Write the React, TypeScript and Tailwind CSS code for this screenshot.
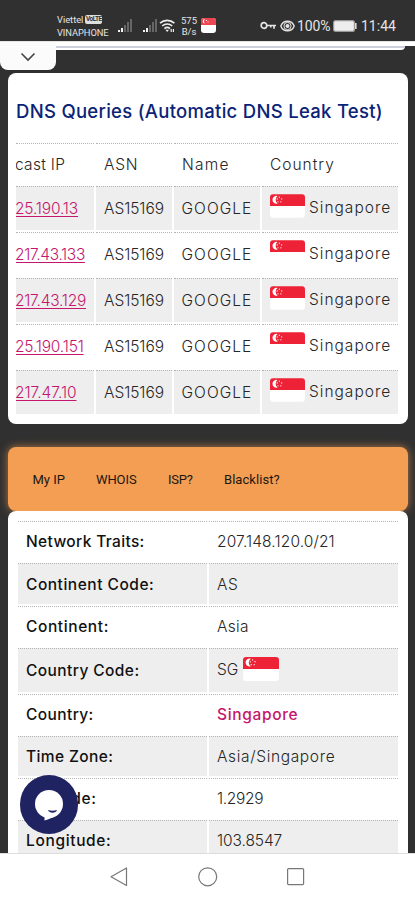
import clsx from "clsx"
import type { ReactNode } from "react"

const dnsRows = [
  { ip: "25.190.13", track: "tracking-[-0.17px]" },
  { ip: "217.43.133", track: "tracking-[-0.35px]" },
  { ip: "217.43.129", track: "tracking-[-0.25px]" },
  { ip: "25.190.151", track: "tracking-[-0.18px]" },
  { ip: "217.47.10", track: "tracking-[-0.05px]" },
]

interface Trait {
  label: string
  labelClass: string
  value: ReactNode
  valueClass: string
  height: string
}

const light = "font-light text-[#262626]"

const traits: Trait[] = [
  { label: "Network Traits:", labelClass: "tracking-[0.35px]", value: "207.148.120.0/21", valueClass: clsx(light, "tracking-[0.12px]"), height: "h-[42px]" },
  { label: "Continent Code:", labelClass: "tracking-[0.52px]", value: "AS", valueClass: clsx(light, "tracking-[0.5px]"), height: "h-[43px]" },
  { label: "Continent:", labelClass: "tracking-[0.6px]", value: "Asia", valueClass: clsx(light, "tracking-[0.3px]"), height: "h-[42px]" },
  { label: "Country Code:", labelClass: "tracking-[0.42px]", value: "SG", valueClass: light, height: "h-[46px]" },
  { label: "Country:", labelClass: "tracking-[0.4px]", value: "Singapore", valueClass: "font-medium tracking-[0.65px] text-[#c4166c]", height: "h-[42px]" },
  { label: "Time Zone:", labelClass: "tracking-[0.4px]", value: "Asia/Singapore", valueClass: clsx(light, "tracking-[0.65px]"), height: "h-[42px]" },
  { label: "Latitude:", labelClass: "tracking-[0.65px]", value: "1.2929", valueClass: clsx(light, "tracking-[-0.3px]"), height: "h-[42px]" },
  { label: "Longitude:", labelClass: "tracking-[0.65px]", value: "103.8547", valueClass: clsx(light, "tracking-[-0.08px]"), height: "h-[42px]" },
]

function Flag({ className }: { className?: string }) {
  return (
    <svg viewBox="0 0 36 24" className={clsx("shrink-0", className)}>
      <path d="M0 12V3a3 3 0 0 1 3-3h30a3 3 0 0 1 3 3v9Z" fill="#ee2237" />
      <path d="M0 12h36v9a3 3 0 0 1-3 3H3a3 3 0 0 1-3-3Z" fill="#fff" />
      <path d="M7.8 1.8A4 4 0 1 0 7.8 9.4A4.6 4.6 0 0 1 7.8 1.8Z" fill="#fff" />
      <g fill="#fff">
        <circle cx="9.6" cy="2.9" r=".65" />
        <circle cx="12" cy="4.7" r=".65" />
        <circle cx="11.2" cy="7.7" r=".65" />
        <circle cx="8.2" cy="7.7" r=".65" />
        <circle cx="7.4" cy="4.8" r=".65" />
      </g>
    </svg>
  )
}

function Signal() {
  return (
    <svg width="14" height="14" viewBox="0 0 14 14">
      <path d="M0 11h2v2H0zM3 9h2v4H3z" fill="#f4f4f4" />
      <path d="M6 6h2v7H6zM9 3h2v10H9zM12 0h2v13h-2z" fill="#666" />
    </svg>
  )
}

function StatusBar() {
  return (
    <header className="flex h-[41px] shrink-0 items-start pl-[57px] font-['Roboto',sans-serif] text-[#e4e4e4]">
      <div className="w-[61px] pt-[13px] text-[9.3px] leading-[13px]">
        <div className="flex items-center whitespace-nowrap">
          Viettel
          <span className="ml-[2px] flex h-[9px] w-[17px] items-center justify-center rounded-[2px] bg-[#dedede] text-[6.5px] font-bold tracking-[-0.5px] text-[#303030]">
            VoLTE
          </span>
        </div>
        <div className="tracking-[-0.05px]">VINAPHONE</div>
      </div>
      <div className="flex pt-[19px]">
        <Signal />
        <div className="w-[11px]" />
        <Signal />
      </div>
      <svg width="18" height="16" viewBox="0 0 18 16" className="mt-[18px] ml-[2px]" fill="none" stroke="#eee" strokeWidth="1.6">
        <path d="M1 5.2a10.5 10.5 0 0 1 14.4 0M3.2 8a7.4 7.4 0 0 1 10 0M5.4 10.6a4.2 4.2 0 0 1 5.6 0" />
        <path d="M6.4 11.8h3.6L8.2 14Z" fill="#eee" stroke="none" />
        <path d="M12.2 11v3M14.4 11v3" strokeWidth="1.2" />
      </svg>
      <div className="mt-[15px] ml-[4px] w-[16px] text-center text-[9.5px] leading-[11px]">
        <div>575</div>
        <div>B/s</div>
      </div>
      <div className="mt-[18px] ml-[4px] h-[15px] w-[15px] overflow-hidden rounded-[3px] bg-white">
        <svg width="15" height="7" viewBox="0 0 15 7">
          <path d="M0 0h15v7H0z" fill="#ed4452" />
          <path d="M4 1a2.2 2.2 0 1 0 0 4.4A2.9 2.9 0 0 1 4 1Z" fill="#fff" />
          <path d="M5 2h1v1H5zM6.5 3.5h1v1h-1z" fill="#fff" />
        </svg>
      </div>
      <svg width="17" height="10" viewBox="0 0 17 10" className="mt-[21px] ml-[44px]" fill="none" stroke="#e4e4e4" strokeWidth="1.7">
        <circle cx="4" cy="4.5" r="2.8" />
        <path d="M6.8 4.5H16M14 4.5v3.2M10.8 4.5v2" />
      </svg>
      <svg width="15" height="12" viewBox="0 0 15 12" className="mt-[20px] ml-[3px]" fill="none" stroke="#e4e4e4" strokeWidth="1.4">
        <path d="M.8 6C3.3-.4 11.7-.4 14.2 6C11.7 12.4 3.3 12.4.8 6Z" />
        <circle cx="7.5" cy="6" r="3.6" strokeWidth="1" />
        <circle cx="7.5" cy="6" r="2" fill="#e4e4e4" stroke="none" />
      </svg>
      <div className="mt-[17px] ml-[2px] w-[33px] text-[14px] leading-[18px] tracking-[-0.1px] whitespace-nowrap">100%</div>
      <svg width="24" height="12" viewBox="0 0 24 12" className="mt-[20px] ml-[3px]">
        <rect x=".6" y=".6" width="20.8" height="10.8" rx="2" fill="#eee" stroke="#999" strokeWidth="1.2" />
        <path d="M22 3h1.6v6H22z" fill="#ddd" />
      </svg>
      <div className="mt-[17px] ml-[4px] text-[14px] leading-[18px] whitespace-nowrap">11:44</div>
    </header>
  )
}

const dnsGrid = "grid grid-cols-[78px_76px_86px_136px] gap-x-[2px]"
const dotted = "border-t border-dotted border-[#b5b5b5]"

function DnsCard() {
  return (
    <section className="mr-[7px] ml-[8px] mt-[3px] h-[351px] shrink-0 overflow-hidden rounded-lg bg-white px-[8px] pt-[27px]">
      <h2 className="h-[43px] text-[18.5px] leading-[23px] font-[450] tracking-[0.29px] whitespace-nowrap text-[#0a2378]">
        DNS Queries (Automatic DNS Leak Test)
      </h2>
      <div className="w-[382px] overflow-hidden text-[15.5px] font-light text-[#262626]">
        <div className={clsx(dnsGrid, "h-[43px] leading-[41px]")}>
          <div className={clsx(dotted, "overflow-hidden")}>
            <span className="-ml-[1px] tracking-[0.3px] whitespace-nowrap">cast IP</span>
          </div>
          <div className={clsx(dotted, "pl-2 tracking-[0.7px]")}>ASN</div>
          <div className={clsx(dotted, "pl-2 tracking-[1.2px]")}>Name</div>
          <div className={clsx(dotted, "pl-2 tracking-[1px]")}>Country</div>
        </div>
        {dnsRows.map((row, i) => {
          const cell = clsx(dotted, "overflow-hidden whitespace-nowrap", i % 2 === 0 && "bg-[#eee]")
          return (
            <div key={row.ip} className={clsx(dnsGrid, "h-[46px] pb-[2px] leading-[44px]")}>
              <div className={cell}>
                <a className={clsx("-ml-[1px] text-[#c4166c] underline underline-offset-2", row.track)}>{row.ip}</a>
              </div>
              <div className={clsx(cell, "pl-2 tracking-[-0.05px]")}>AS15169</div>
              <div className={clsx(cell, "pl-[7.5px] tracking-[1.05px]")}>GOOGLE</div>
              <div className={clsx(cell, "flex items-start pl-2 tracking-[1px]")}>
                <Flag className="mt-[7px] mr-[4px] h-[24px] w-[35px]" />
                <span className="leading-[41px]">Singapore</span>
              </div>
            </div>
          )
        })}
      </div>
    </section>
  )
}

function Tabs() {
  return (
    <nav className="relative z-10 mr-[7px] ml-[8px] mt-[23px] flex h-[64px] shrink-0 items-center rounded-lg bg-[#f49e54] pt-[1px] pl-[24.5px] font-['Roboto',sans-serif] text-[13px] text-[#1d1711] shadow-[0_0_9px_#f49e54aa]">
      <span className="w-[63.5px]">My IP</span>
      <span className="w-[72px] tracking-[-0.1px]">WHOIS</span>
      <span className="w-[56px] tracking-[-0.2px]">ISP?</span>
      <span className="tracking-[0.05px]">Blacklist?</span>
    </nav>
  )
}

function TraitsCard() {
  return (
    <section className="relative z-20 mr-[7px] ml-[8px] min-h-0 flex-1 overflow-hidden rounded-t-lg bg-white pt-[10px] pr-[9px] pl-[10px]">
      {traits.map((t, i) => {
        const cell = clsx(dotted, "flex items-center overflow-hidden pt-[1px] pl-2 text-[15.5px] whitespace-nowrap", i % 2 === 1 && "bg-[#eee]")
        return (
          <div key={t.label} className={clsx("grid grid-cols-[189px_189px] gap-x-[2px] pb-[2px]", t.height)}>
            <div className={clsx(cell, "font-[450] text-[#111]", t.labelClass)}>{t.label}</div>
            <div className={clsx(cell, t.valueClass)}>
              {t.value === "SG" ? (
                <>
                  <span className="-mt-[3px]">SG</span>
                  <Flag className="-mt-[5px] ml-[5px] h-[24px] w-[36px]" />
                </>
              ) : (
                t.value
              )}
            </div>
          </div>
        )
      })}
    </section>
  )
}

function SystemNav() {
  return (
    <footer className="flex h-[47px] shrink-0 justify-center border-t border-[#ddd] bg-white pt-[13px]">
      <svg width="196" height="20" viewBox="0 0 196 20" fill="none" stroke="#777" strokeWidth="1.2" strokeLinejoin="round">
        <path d="M16.5 1v17.4L1 9.8Z" />
        <circle cx="97.7" cy="9.8" r="9" />
        <rect x="177.6" y="1.6" width="16" height="16" rx="1" />
      </svg>
    </footer>
  )
}

export default function App() {
  return (
    <div className="relative flex h-[900px] w-[415px] flex-col overflow-hidden bg-[#303030] font-['Inter',sans-serif]">
      <StatusBar />
      <div className="relative h-[29px] shrink-0">
        <div className="h-[5px] border-t border-black/10 bg-white" />
        <div className="ml-[50px] h-[4px] w-[355px] rounded-br-lg border-t-2 border-[#cbd0dc] bg-white" />
        <button aria-label="Expand" className="absolute top-[1px] left-0 flex h-[28px] w-[56px] items-center justify-center rounded-b-lg bg-[#fbfbfb]">
          <svg width="16" height="10" viewBox="0 0 16 10" fill="none" stroke="#444" strokeWidth="1.6" className="mt-[1px]">
            <path d="m1.5 1.5 6.5 6.5 6.5-6.5" />
          </svg>
        </button>
      </div>
      <DnsCard />
      <Tabs />
      <TraitsCard />
      <SystemNav />
      <button aria-label="Chat" className="absolute top-[775px] left-[20px] z-30 h-[59px] w-[58px] rounded-full bg-[#1f2361]">
        <svg viewBox="0 0 58 59" className="h-full w-full">
          <circle cx="29" cy="29" r="14" fill="#fff" />
          <path d="M24.5 40v5.4c4-.7 10-3.4 13-6.4Z" fill="#fff" />
          <path d="M28 35c3 .9 6 .9 9 0c-.8 3.4-7.8 3.6-9 0Z" fill="#1f2361" />
        </svg>
      </button>
    </div>
  )
}
